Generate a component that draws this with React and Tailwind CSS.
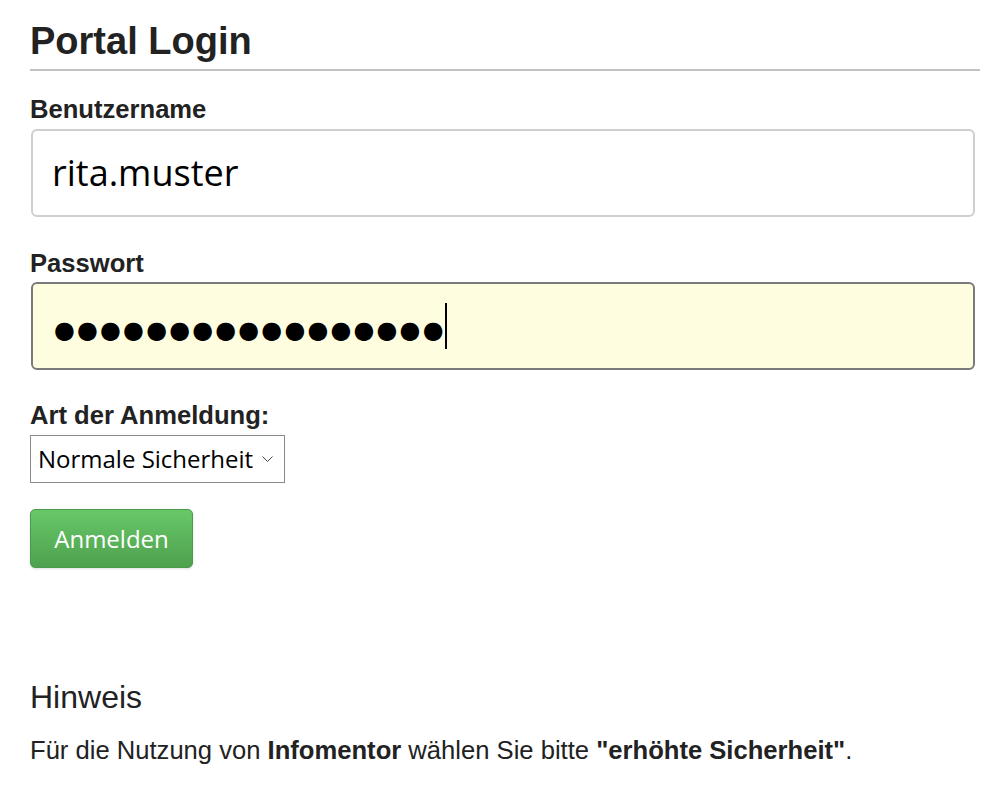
const Label = ({ children, className = '' }) => (
    <div className={`text-[25.6px] leading-[28px] font-bold text-[#222] ${className}`}>{children}</div>
);

const App = () => {
    return (
        <section className="min-h-screen bg-white font-['Liberation_Sans',Arial,sans-serif]">
            <div className="pl-[30px] pr-[13px]">
                {/* Header */}
                <h1 className="pt-[19px] pb-[6px] border-b-2 border-[#c2c2c2] text-[38px] leading-[44px] font-bold text-[#222]">
                    Portal Login
                </h1>

                {/* Benutzername */}
                <Label className="mt-[24px]">Benutzername</Label>
                <div className="mt-[6px] mr-[5px] ml-px h-[88px] flex items-center rounded-[6px] border-2 border-[#cfcfcf] bg-white pl-[19px]">
                    <span className="font-['Open_Sans',sans-serif] text-[36px] text-black">rita.muster</span>
                </div>

                {/* Passwort */}
                <Label className="mt-[32px]">Passwort</Label>
                <div className="mt-[5px] mr-[5px] ml-px h-[88px] flex items-center rounded-[6px] border-2 border-[#7a7a7a] bg-[#fefddf] pl-[21px]">
                    <span className="mt-[8px] font-['DejaVu_Sans',sans-serif] text-[24px] tracking-[2.1px] text-black leading-none">
                        ●●●●●●●●●●●●●●●●●
                    </span>
                    <span className="-ml-[1px] w-[2px] h-[46px] bg-black" />
                </div>

                {/* Art der Anmeldung */}
                <Label className="mt-[31px]">Art der Anmeldung:</Label>
                <div className="mt-[6px] w-[255px] h-[48px] flex items-center justify-between border border-[#8a8a8a] bg-white pl-[7px] pr-[11px]">
                    <span className="font-['Open_Sans',sans-serif] text-[24px] text-black">Normale Sicherheit</span>
                    <svg width="11" height="7" viewBox="0 0 11 7" className="mt-[1px]">
                        <polyline points="0.5,0.5 5.5,5.5 10.5,0.5" fill="none" stroke="#444" strokeWidth="1" />
                    </svg>
                </div>

                {/* Button */}
                <button className="mt-[26px] w-[163px] h-[59px] rounded-[5px] border border-[#4a9a4a] bg-gradient-to-b from-[#68c868] to-[#4ea14e] text-white font-['Open_Sans',sans-serif] text-[24px] shadow-sm">
                    Anmelden
                </button>

                {/* Hinweis */}
                <h3 className="mt-[111px] text-[32px] leading-[36px] text-[#222]">Hinweis</h3>
                <p className="mt-[21px] text-[25.6px] leading-[28px] text-[#222]">
                    Für die Nutzung von <b>Infomentor</b> wählen Sie bitte <b>"erhöhte Sicherheit"</b>.
                </p>
            </div>
        </section>
    );
};

export default App;
